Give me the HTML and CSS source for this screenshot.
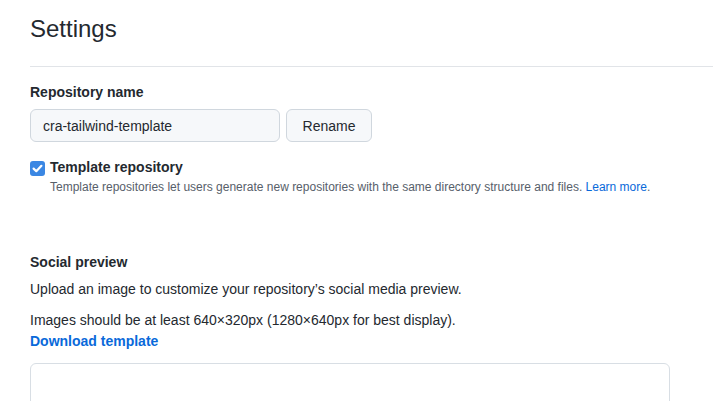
FILE: index.html
```html
<!DOCTYPE html>
<html lang="en">
<head>
    <meta charset="UTF-8">
    <meta name="viewport" content="width=device-width, initial-scale=1.0">
    <title>Settings</title>
    <link rel="stylesheet" href="styles.css">
</head>
<body>
   <main class="settings">
     <div class="subhead">
        <h2 class="subhead-title">Settings</h2>
     </div>

     <div class="form-group">
        <label class="form-label" for="repo-name">Repository name</label>
        <div class="rename-row">
           <input class="form-input" id="repo-name" type="text" value="cra-tailwind-template">
           <button class="btn" type="button">Rename</button>
        </div>
     </div>

     <div class="check-group">
        <span class="check-box">
           <svg width="15" height="15" viewBox="0 0 15 15">
              <rect x="0" y="0" width="15" height="15" rx="3" fill="#3b87e3"/>
              <path d="M3.6 7.6 L6.3 10.2 L11.4 4.8" fill="none" stroke="#fff" stroke-width="2.2" stroke-linecap="round" stroke-linejoin="round"/>
           </svg>
        </span>
        <div class="check-text">
           <div class="check-title">Template repository</div>
           <p class="note">Template repositories let users generate new repositories with the same directory structure and files. <a href="#">Learn more</a>.</p>
        </div>
     </div>

     <div class="social">
        <div class="form-label">Social preview</div>
        <p class="social-text">Upload an image to customize your repository’s social media preview.</p>
        <p class="social-size">Images should be at least 640×320px (1280×640px for best display).</p>
        <a class="download" href="#">Download template</a>
        <div class="preview-box"></div>
     </div>
   </main>
</body>
</html>
```

FILE: styles.css
```css
*{
    margin: 0;
    padding: 0;
    box-sizing: border-box;
}
body{
    background-color: #fff;
    font-family: "Liberation Sans", Arial, sans-serif;
    font-size: 14px;
    line-height: 21px;
    color: #24292f;
}
.settings{
    padding: 11px 0 0 30px;
}
.subhead{
    padding-bottom: 19px;
    border-bottom: 1px solid #e1e4e8;
}
.subhead-title{
    font-size: 24px;
    line-height: 36px;
    font-weight: 400;
}
.form-group{
    margin-top: 15px;
}
.form-label{
    display: block;
    font-weight: 700;
}
.rename-row{
    display: flex;
    gap: 6px;
    margin-top: 6px;
}
.form-input{
    width: 250px;
    height: 33px;
    padding: 0 12px;
    font-family: inherit;
    font-size: 14px;
    color: #24292f;
    background-color: #f6f8fa;
    border: 1px solid #d0d7de;
    border-radius: 6px;
    outline: none;
}
.btn{
    width: 86px;
    height: 33px;
    font-family: inherit;
    font-size: 14px;
    color: #24292f;
    background-color: #f6f8fa;
    border: 1px solid #d0d7de;
    border-radius: 6px;
}
.check-group{
    display: flex;
    gap: 5px;
    margin-top: 15px;
}
.check-box{
    display: flex;
    padding-top: 4px;
}
.check-title{
    font-weight: 700;
}
.note{
    font-size: 12px;
    line-height: 18px;
    color: #57606a;
}
.note a{
    color: #0969da;
    text-decoration: none;
}
.social{
    margin-top: 56px;
}
.social-text{
    margin-top: 6px;
}
.social-size{
    margin-top: 10px;
}
.download{
    display: block;
    font-weight: 700;
    color: #0969da;
    text-decoration: none;
}
.preview-box{
    width: 640px;
    height: 120px;
    margin-top: 11px;
    border: 1px solid #d8dee4;
    border-radius: 6px;
}
```
